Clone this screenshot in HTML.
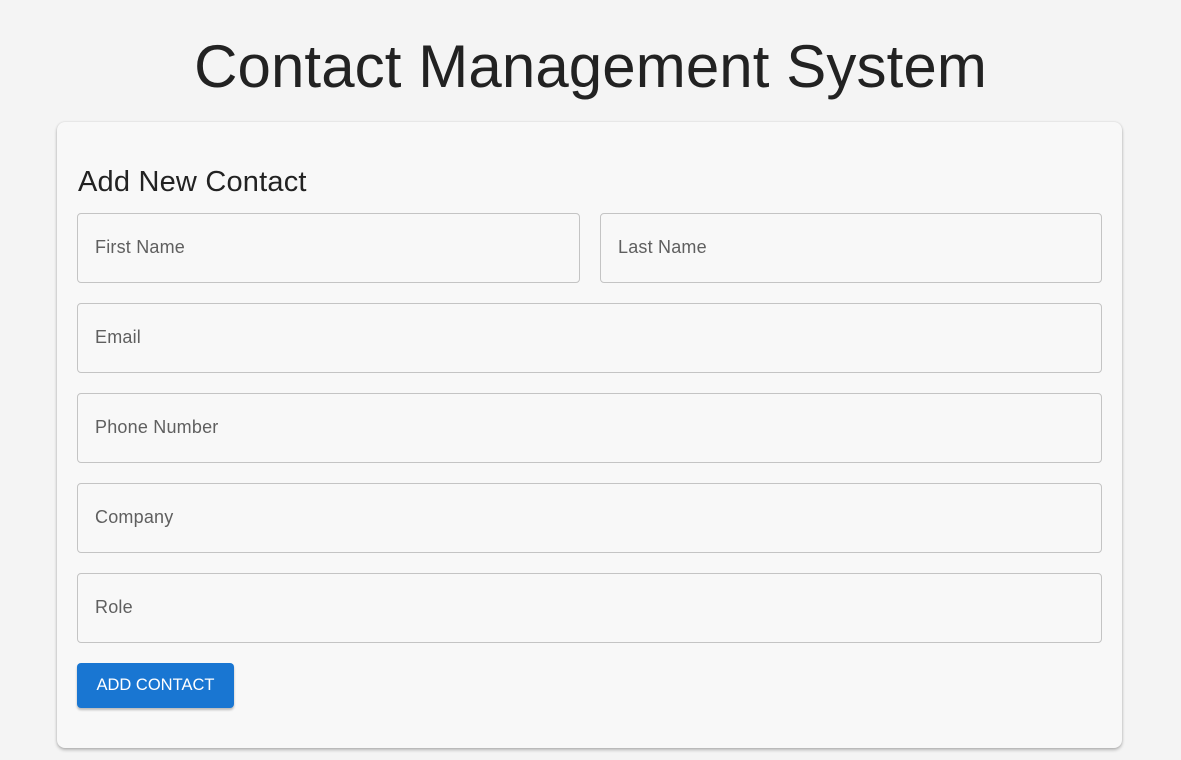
<!DOCTYPE html>
<html><head><style>
body{margin:0;background:#f4f4f4;font-family:"Liberation Sans",sans-serif;width:1181px;height:760px;overflow:hidden;position:relative}
h1{position:absolute;top:29px;left:0;width:1181px;text-align:center;margin:0;font-weight:400;font-size:60px;line-height:76px;color:#222;letter-spacing:0.1px}
.card{position:absolute;left:57px;top:122px;width:1065px;height:626px;background:#f8f8f8;border-radius:8px;box-shadow:0 2px 3px rgba(0,0,0,.25),0 0 2px rgba(0,0,0,.12)}
h2{position:absolute;left:21px;top:42px;margin:0;font-weight:400;font-size:29px;color:#222;line-height:36px;letter-spacing:0.2px}
.f{position:absolute;height:68px;border:1px solid #c4c4c4;border-radius:4px;box-sizing:content-box;font-size:18px;color:#5f5f5f;line-height:67px;padding-left:17px;letter-spacing:0.2px}
.btn{position:absolute;left:20px;top:541px;width:157px;height:45px;background:#1976d2;color:#fff;border-radius:4px;font-size:16.5px;line-height:45px;text-align:center;box-shadow:0 2px 2px rgba(0,0,0,.25)}
</style></head><body>
<h1>Contact Management System</h1>
<div class="card">
<h2>Add New Contact</h2>
<div class="f" style="left:20px;top:91px;width:484px">First Name</div>
<div class="f" style="left:543px;top:91px;width:483px">Last Name</div>
<div class="f" style="left:20px;top:181px;width:1006px">Email</div>
<div class="f" style="left:20px;top:271px;width:1006px">Phone Number</div>
<div class="f" style="left:20px;top:361px;width:1006px">Company</div>
<div class="f" style="left:20px;top:451px;width:1006px">Role</div>
<div class="btn">ADD CONTACT</div>
</div>
</body></html>
